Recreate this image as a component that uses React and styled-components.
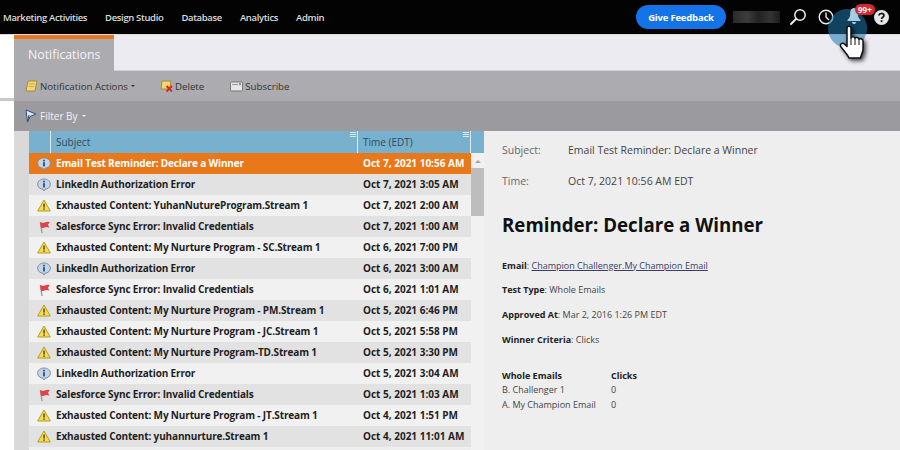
import React from "react";
import styled, { createGlobalStyle } from "styled-components";

const navItems = ["Marketing Activities", "Design Studio", "Database", "Analytics", "Admin"];

const rows = [
  ["info", "Email Test Reminder: Declare a Winner", "Oct 7, 2021 10:56 AM"],
  ["info", "LinkedIn Authorization Error", "Oct 7, 2021 3:05 AM"],
  ["warn", "Exhausted Content: YuhanNutureProgram.Stream 1", "Oct 7, 2021 2:00 AM"],
  ["flag", "Salesforce Sync Error: Invalid Credentials", "Oct 7, 2021 1:00 AM"],
  ["warn", "Exhausted Content: My Nurture Program - SC.Stream 1", "Oct 6, 2021 7:00 PM"],
  ["info", "LinkedIn Authorization Error", "Oct 6, 2021 3:00 AM"],
  ["flag", "Salesforce Sync Error: Invalid Credentials", "Oct 6, 2021 1:01 AM"],
  ["warn", "Exhausted Content: My Nurture Program - PM.Stream 1", "Oct 5, 2021 6:46 PM"],
  ["warn", "Exhausted Content: My Nurture Program - JC.Stream 1", "Oct 5, 2021 5:58 PM"],
  ["warn", "Exhausted Content: My Nurture Program-TD.Stream 1", "Oct 5, 2021 3:30 PM"],
  ["info", "LinkedIn Authorization Error", "Oct 5, 2021 3:04 AM"],
  ["flag", "Salesforce Sync Error: Invalid Credentials", "Oct 5, 2021 1:03 AM"],
  ["warn", "Exhausted Content: My Nurture Program - JT.Stream 1", "Oct 4, 2021 1:51 PM"],
  ["warn", "Exhausted Content: yuhannurture.Stream 1", "Oct 4, 2021 11:01 AM"],
];

const GlobalStyle = createGlobalStyle`
  html, body {
    margin: 0;
    padding: 0;
    background: #fff;
    font-family: "Open Sans", "Liberation Sans", sans-serif;
  }
`;

const Page = styled.div`
  position: relative;
  width: 900px;
  height: 450px;
  overflow: hidden;
  display: flex;
  flex-direction: column;
  background: #fff;
`;

const TopBar = styled.header`
  height: 34px;
  flex: none;
  display: flex;
  align-items: center;
  background: #030303;
  border-bottom: 1px solid #ddd;
  padding-left: 3px;
`;

const NavItem = styled.a`
  color: #dcdcdc;
  font-size: 9.5px;
  font-weight: 600;
  margin-right: 18px;
  letter-spacing: -0.35px;
  white-space: nowrap;
`;

const TopRight = styled.div`
  margin-left: auto;
  display: flex;
  align-items: center;
`;

const FeedbackButton = styled.button`
  width: 90px;
  height: 24px;
  border: 0;
  border-radius: 12px;
  background: #1473e6;
  color: #fff;
  font-family: inherit;
  font-size: 9.5px;
  font-weight: 700;
  letter-spacing: -0.2px;
  padding: 0;
`;

const BlurredName = styled.div`
  width: 47px;
  height: 12px;
  margin: 0 4px 0 7px;
  background: linear-gradient(90deg, #2a2a2a, #3b3b3b 30%, #222 55%, #343434 80%, #1c1c1c);
`;

const IconSlot = styled.div`
  width: ${(p) => p.$w}px;
  height: 22px;
  display: flex;
  align-items: center;
  justify-content: center;
  position: relative;
`;

const Workspace = styled.div`
  flex: 1;
  min-height: 0;
  display: flex;
  padding-left: 14px;
`;

const Main = styled.div`
  flex: 1;
  min-width: 0;
  display: flex;
  flex-direction: column;
`;

const TabRow = styled.div`
  height: 36px;
  flex: none;
  display: flex;
  background: #ecebf1;
  border-bottom: 1px solid #d2d1d6;
  box-sizing: border-box;
`;

const Tab = styled.div`
  width: 100px;
  box-sizing: border-box;
  border-top: 4px solid #e8781e;
  background: #acabb0;
  color: #f4f4f4;
  font-size: 12.3px;
  font-weight: 400;
  padding: 7px 0 0 14px;
  margin-bottom: -1px;
`;

const Toolbar = styled.div`
  height: 30px;
  flex: none;
  display: flex;
  align-items: center;
  background: #acabb0;
  padding-left: 11px;
  color: #333;
  font-size: 9.7px;
`;

const ToolItem = styled.span`
  display: flex;
  align-items: center;
  gap: 2px;
  margin-right: ${(p) => p.$gap}px;
`;

const Caret = styled.i`
  display: inline-block;
  width: 0;
  height: 0;
  margin-left: 1px;
  border: 2.5px solid transparent;
  border-top-color: ${(p) => p.$color};
  border-bottom: 0;
`;

const FilterBar = styled.div`
  height: 30px;
  flex: none;
  display: flex;
  align-items: center;
  gap: 3px;
  padding-left: 10px;
  background: #9b9a9f;
  color: #f2f2f2;
  font-size: 10px;
`;

const Split = styled.div`
  flex: 1;
  min-height: 0;
  display: flex;
`;

const Gutter = styled.div`
  width: 15px;
  flex: none;
  background: #d9d9d9;
`;

const ListPane = styled.div`
  width: 455px;
  flex: none;
  display: grid;
  grid-template-columns: 442px 13px;
  grid-template-rows: 22px 1fr;
  background: #eee;
`;

const HeaderRow = styled.div`
  grid-column: 1 / 3;
  display: grid;
  grid-template-columns: 329px 113px 13px;
  background: #77b1cd;
  color: #2f4a5c;
  font-size: 10px;
  line-height: 22px;
`;

const HeaderCell = styled.div`
  position: relative;
  box-sizing: border-box;
  padding-left: ${(p) => p.$pad}px;
  border-right: ${(p) => (p.$last ? "0" : "1px solid #dcebf2")};
  border-left: ${(p) => (p.$first ? "1px solid #dcebf2" : "0")};
  margin-left: ${(p) => (p.$first ? "21px" : "0")};
`;

const Grip = styled.span`
  position: absolute;
  right: 1px;
  top: 1px;
  width: 6px;
  height: 5px;
  background: repeating-linear-gradient(0deg, #dcebf2 0 1px, transparent 1px 2px);
`;

const Rows = styled.div`
  overflow: hidden;
`;

const Row = styled.div`
  height: 21px;
  box-sizing: border-box;
  padding-bottom: 2px;
  display: grid;
  grid-template-columns: 27px 302px 113px;
  align-items: center;
  background: ${(p) => (p.$selected ? "#e8781a" : p.$odd ? "#e2e2e2" : "#f1f1f1")};
  color: ${(p) => (p.$selected ? "#fff" : "#1e1e1e")};
  font-size: 10px;
  font-weight: 700;
  white-space: nowrap;
`;

const RowIcon = styled.div`
  display: flex;
  justify-content: center;
  padding: 2px 0 0 2px;
`;

const SubjectCell = styled.div`
  letter-spacing: -0.15px;
`;

const TimeCell = styled.div`
  padding-left: 5px;
`;

const ScrollTrack = styled.div`
  background: #f1f1f1;
  display: flex;
  flex-direction: column;
  align-items: center;
`;

const ScrollArrow = styled.i`
  width: 0;
  height: 0;
  margin: 7px 0 5px;
  border: 3px solid transparent;
  border-bottom: 3px solid #a3a3a3;
  border-top: 0;
`;

const ScrollThumb = styled.div`
  width: 100%;
  height: 48px;
  background: #bdbdbd;
`;

const Detail = styled.div`
  flex: 1;
  min-width: 0;
  background: #eeeeee;
  padding: 12px 0 0 18px;
  color: #333;
  font-size: 9px;
`;

const MetaRow = styled.div`
  display: grid;
  grid-template-columns: 66px 1fr;
  font-size: 10.5px;
  line-height: 14px;
  margin-bottom: 17px;
  color: #444;
`;

const MetaLabel = styled.span`
  color: #666;
`;

const Heading = styled.h1`
  margin: 25px 0 22.5px;
  font-size: 18.7px;
  line-height: 24px;
  font-weight: 700;
  color: #111;
`;

const Para = styled.p`
  margin: 0 0 12.3px;
  line-height: 12.5px;
  color: #444;
  b {
    font-weight: 700;
    color: #222;
  }
  a {
    color: #3c3c66;
    text-decoration: underline;
  }
`;

const StatsTable = styled.div`
  margin-top: 22.5px;
  display: grid;
  grid-template-columns: 109px 1fr;
  line-height: 14.5px;
  color: #444;
  b {
    font-weight: 700;
    color: #222;
  }
`;

const BellGlow = styled.div`
  position: absolute;
  left: 828px;
  top: 9px;
  width: 39px;
  height: 39px;
  border-radius: 50%;
  background: rgba(30, 120, 175, 0.55);
`;

const Badge = styled.span`
  position: absolute;
  left: 855px;
  top: 4px;
  height: 11px;
  padding: 0 3px;
  border-radius: 6px;
  background: #d7262f;
  color: #fff;
  font-size: 8px;
  line-height: 11px;
  font-weight: 700;
`;

const Overlay = styled.div`
  position: absolute;
  left: ${(p) => p.$x}px;
  top: ${(p) => p.$y}px;
  line-height: 0;
`;

const LeftRule = styled.div`
  position: absolute;
  left: 0;
  top: 98px;
  width: 14px;
  height: 3px;
  background: #c9c9c9;
`;

const Info = () => (
  <svg width="14" height="14" viewBox="0 0 14 14">
    <path d="M7 1 C10.6 1 13.4 3.2 13.4 6.2 C13.4 9.2 10.6 11.2 8 11.2 L7 13 L6 11.2 C3.4 11.2 .6 9.2 .6 6.2 C.6 3.2 3.4 1 7 1 Z" fill="#c5d3e4" stroke="#7d8ea6" />
    <rect x="6" y="5.2" width="2" height="4.2" fill="#2f5c96" />
    <rect x="6" y="2.8" width="2" height="1.6" fill="#2f5c96" />
  </svg>
);

const Warn = () => (
  <svg width="14" height="13" viewBox="0 0 14 13">
    <path d="M7 1 L13.3 12 H.7 Z" fill="#f6dc4f" stroke="#b89b1f" strokeLinejoin="round" />
    <rect x="6.4" y="4.6" width="1.3" height="4" fill="#333" />
    <rect x="6.4" y="9.4" width="1.3" height="1.4" fill="#333" />
  </svg>
);

const Flag = () => (
  <svg width="14" height="14" viewBox="0 0 14 14">
    <path d="M3.4 2 L5 13" stroke="#9b9b9b" strokeWidth="1.4" />
    <path d="M3 2 Q6 3.5 8 2.4 T12.6 2 L11 5 L12.4 7.4 Q9.5 6.4 7.5 7.4 T3.9 7.6 Z" fill="#e5404a" />
  </svg>
);

const rowIcons = { info: Info, warn: Warn, flag: Flag };

const NoteIcon = () => (
  <svg width="13" height="12" viewBox="0 0 13 12">
    <path d="M3 1 H12 L10 11 H1 Z" fill="#f0d878" stroke="#a88c30" />
    <path d="M4 4 H10 M3.5 6.5 H9.5" stroke="#c9ad4c" />
  </svg>
);

const DeleteIcon = () => (
  <svg width="13" height="12" viewBox="0 0 13 12">
    <path d="M2 1 H11 L9.5 9 H1 Z" fill="#f0d878" stroke="#a88c30" />
    <path d="M6.5 6 L12 11.5 M12 6 L6.5 11.5" stroke="#cf2a1f" strokeWidth="1.8" />
  </svg>
);

const MailIcon = () => (
  <svg width="13" height="11" viewBox="0 0 13 11">
    <rect x=".5" y="1" width="12" height="9" rx="1" fill="#e6e6e6" stroke="#777" />
    <path d="M2 3.5 H8" stroke="#999" />
    <rect x="9" y="2.2" width="2" height="2" fill="#888" />
  </svg>
);

const FilterIcon = () => (
  <svg width="13" height="14" viewBox="0 0 13 14">
    <path d="M2 1 L12 5 L6 7.5 L3.5 13 Z" fill="#dfe6ee" stroke="#2f4f78" />
    <path d="M3.5 13 L5 6" stroke="#2f4f78" />
  </svg>
);

const SearchIcon = () => (
  <svg width="18" height="18" viewBox="0 0 18 18" fill="none" stroke="#eee" strokeWidth="1.5">
    <circle cx="11" cy="7" r="5.2" />
    <path d="M7.2 10.8 L2 16" strokeWidth="2" strokeLinecap="round" />
  </svg>
);

const ClockIcon = () => (
  <svg width="16" height="16" viewBox="0 0 16 16" fill="none" stroke="#eee" strokeWidth="1.4">
    <circle cx="8" cy="8" r="6.8" />
    <path d="M8 3.5 V8 L11 11" />
  </svg>
);

const BellIcon = () => (
  <svg width="14" height="18" viewBox="0 0 14 18" fill="#a8cde0">
    <path d="M7 1 C10 1 10.8 4 10.8 7 C10.8 10 12 11.5 13.5 13 V14 H.5 V13 C2 11.5 3.2 10 3.2 7 C3.2 4 4 1 7 1 Z" />
    <path d="M5 15 H9 C9 16.5 8 17 7 17 C6 17 5 16.5 5 15 Z" />
  </svg>
);

const HelpIcon = () => (
  <svg width="15" height="15" viewBox="0 0 15 15">
    <circle cx="7.5" cy="7.5" r="7.5" fill="#e6e6e6" />
    <path d="M5 5.6 C5 2.8 10 2.8 10 5.4 C10 7.2 7.6 7.2 7.6 9" fill="none" stroke="#111" strokeWidth="1.7" />
    <rect x="6.7" y="10.2" width="1.8" height="1.9" fill="#111" />
  </svg>
);

const HandCursor = () => (
  <svg width="32" height="40" viewBox="0 0 32 40" style={{ filter: "drop-shadow(2px 2px 2px rgba(0,0,0,.75))" }}>
    <path
      d="M9 4 C9 1.5 13 1.5 13 4 V14 C13 12.3 17 12.3 17 14.5 C17 13 21 13 21 15.5 C21 14 25 14.5 25 17 V25 C25 29 23 31 22.5 34 H11 C10 31 6 27 3 23 C1.5 20.5 4 18 6.5 20 L9 22.5 Z"
      fill="#fff"
      stroke="#111"
      strokeWidth="1.5"
      strokeLinejoin="round"
    />
    <path d="M13 14 V21 M17 14.5 V21 M21 15.5 V21" stroke="#111" strokeWidth="1" />
  </svg>
);

const App = () => {
  return (
    <Page>
      <GlobalStyle />
      <TopBar>
        {navItems.map((item) => (
          <NavItem key={item}>{item}</NavItem>
        ))}
        <TopRight>
          <FeedbackButton>Give Feedback</FeedbackButton>
          <BlurredName />
          <IconSlot $w={28}>
            <SearchIcon />
          </IconSlot>
          <IconSlot $w={28}>
            <ClockIcon />
          </IconSlot>
          <IconSlot $w={32} />
          <IconSlot $w={18}>
            <HelpIcon />
          </IconSlot>
          <IconSlot $w={10} />
        </TopRight>
      </TopBar>
      <Workspace>
        <Main>
          <TabRow>
            <Tab>Notifications</Tab>
          </TabRow>
          <Toolbar>
            <ToolItem $gap={25}>
              <NoteIcon />
              Notification Actions
              <Caret $color="#333" />
            </ToolItem>
            <ToolItem $gap={26}>
              <DeleteIcon />
              Delete
            </ToolItem>
            <ToolItem>
              <MailIcon />
              Subscribe
            </ToolItem>
          </Toolbar>
          <FilterBar>
            <FilterIcon />
            Filter By
            <Caret $color="#f2f2f2" />
          </FilterBar>
          <Split>
            <Gutter />
            <ListPane>
              <HeaderRow>
                <HeaderCell $first $pad={5}>
                  Subject
                  <Grip />
                </HeaderCell>
                <HeaderCell $pad={5}>
                  Time (EDT)
                  <Grip />
                </HeaderCell>
                <HeaderCell $last />
              </HeaderRow>
              <Rows>
                {rows.map(([icon, subject, time], i) => {
                  const Icon = rowIcons[icon];
                  return (
                    <Row key={i} $selected={i === 0} $odd={i % 2 === 1}>
                      <RowIcon>
                        <Icon />
                      </RowIcon>
                      <SubjectCell>{subject}</SubjectCell>
                      <TimeCell>{time}</TimeCell>
                    </Row>
                  );
                })}
              </Rows>
              <ScrollTrack>
                <ScrollArrow />
                <ScrollThumb />
              </ScrollTrack>
            </ListPane>
            <Detail>
              <MetaRow>
                <MetaLabel>Subject:</MetaLabel>
                <span>Email Test Reminder: Declare a Winner</span>
              </MetaRow>
              <MetaRow>
                <MetaLabel>Time:</MetaLabel>
                <span>Oct 7, 2021 10:56 AM EDT</span>
              </MetaRow>
              <Heading>Reminder: Declare a Winner</Heading>
              <Para>
                <b>Email</b>: <a>Champion Challenger.My Champion Email</a>
              </Para>
              <Para>
                <b>Test Type</b>: Whole Emails
              </Para>
              <Para>
                <b>Approved At</b>: Mar 2, 2016 1:26 PM EDT
              </Para>
              <Para>
                <b>Winner Criteria</b>: Clicks
              </Para>
              <StatsTable>
                <b>Whole Emails</b>
                <b>Clicks</b>
                <span>B. Challenger 1</span>
                <span>0</span>
                <span>A. My Champion Email</span>
                <span>0</span>
              </StatsTable>
            </Detail>
          </Split>
        </Main>
      </Workspace>
      <LeftRule />
      <BellGlow />
      <Overlay $x={847} $y={7}>
        <BellIcon />
      </Overlay>
      <Badge>99+</Badge>
      <Overlay $x={838} $y={24}>
        <HandCursor />
      </Overlay>
    </Page>
  );
};

export default App;
